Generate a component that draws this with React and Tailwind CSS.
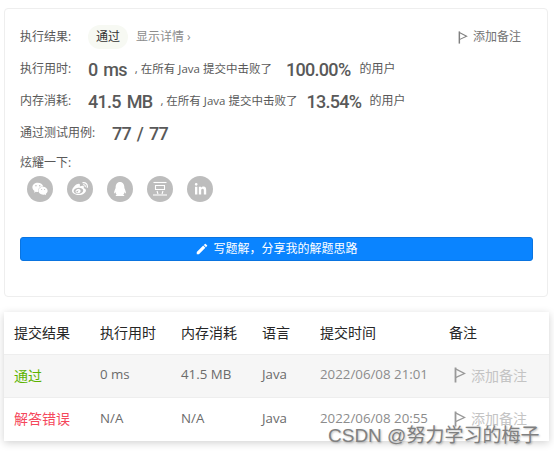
// App.jsx - submission result panel
import React from 'react';
import { FaWeixin, FaWeibo, FaQq, FaLinkedinIn } from 'react-icons/fa';
import { MdEdit } from 'react-icons/md';

const Flag = ({ className }) => (
  <svg viewBox="0 0 12 16" className={className} fill="none" stroke="currentColor">
    <path d="M1.5 0.5V15.5" strokeWidth="1.8" />
    <path d="M1.5 1.8L10.5 6.5L1.5 10.6" strokeWidth="1.3" />
  </svg>
);

const Douban = () => (
  <svg viewBox="0 0 16 16" className="w-4 h-4" fill="none" stroke="currentColor" strokeWidth="1.1">
    <path d="M1.5 1.5H14.5" />
    <path d="M3.5 4.5H12.5V8.5H3.5Z" />
    <path d="M5 10L6 13" />
    <path d="M11 10L10 13" />
    <path d="M1 14H15" />
  </svg>
);

const Num = ({ className = '', children }) => (
  <span className={`font-['Roboto',sans-serif] font-medium text-[#595959] text-[18px] tracking-[-0.7px] [word-spacing:2px] ${className}`}>
    {children}
  </span>
);

const shareIcons = [
  <FaWeixin key="wx" className="text-[16px]" />,
  <FaWeibo key="wb" className="text-[16px]" />,
  <FaQq key="qq" className="text-[14px]" />,
  <Douban key="db" />,
  <FaLinkedinIn key="in" className="text-[13px]" />,
];

const rows = [
  { status: '通过', color: 'text-[#5cb300]', time: '0 ms', mem: '41.5 MB', date: '2022/06/08 21:01', bg: 'bg-[#f6f6f6]' },
  { status: '解答错误', color: 'text-[#f5475b]', time: 'N/A', mem: 'N/A', date: '2022/06/08 20:55', bg: 'bg-white' },
];

const gridCols = 'grid grid-cols-[86px_81px_81px_58px_129px_110px] items-center pl-[10px] pb-[2px] h-[43px]';

const App = () => {
  return (
    <div className="relative w-[554px] h-[455px] overflow-hidden bg-white font-['Open_Sans','Noto_Sans_CJK_SC',sans-serif] text-[13.3px]">
      <div className="pt-2 pl-1">
        {/* Result card */}
        <div className="w-[544px] h-[289px] border border-[#eeeeee] rounded-[4px] pt-4 pl-[15px] pr-[15px] text-[#595959] text-[11.5px]">
          <div className="flex items-center h-6">
            <span className="w-[68px] text-[12px]">执行结果:</span>
            <span className="w-10 h-6 flex items-center justify-center rounded-full bg-[#f7f9f3] text-[#333333] text-[12px]">通过</span>
            <span className="ml-2 text-[#8c8c8c] text-[12px]">显示详情 ›</span>
            <span className="ml-auto mr-[11px] flex items-center gap-[5px] text-[#737373] text-[12px]">
              <Flag className="w-[10px] h-[13px] text-[#808080]" />
              添加备注
            </span>
          </div>
          <div className="flex items-center h-6 mt-2">
            <span className="w-[68px] text-[12px]">执行用时:</span>
            <Num>0 ms</Num>
            <span className="ml-2">, 在所有 Java 提交中击败了</span>
            <Num className="ml-[14px]">100.00%</Num>
            <span className="ml-[9px] text-[12px]">的用户</span>
          </div>
          <div className="flex items-center h-6 mt-2">
            <span className="w-[68px] text-[12px]">内存消耗:</span>
            <Num>41.5 MB</Num>
            <span className="ml-2">, 在所有 Java 提交中击败了</span>
            <Num className="ml-[9px]">13.54%</Num>
            <span className="ml-2 text-[12px]">的用户</span>
          </div>
          <div className="flex items-center h-6 mt-2">
            <span className="w-[92px] text-[12px]">通过测试用例:</span>
            <Num>77 / 77</Num>
          </div>
          <div className="h-5 mt-2 flex items-center text-[12px]">炫耀一下:</div>
          <div className="flex gap-[14px] pl-[7px] mt-[3px]">
            {shareIcons.map((icon, i) => (
              <div key={i} className="w-[26px] h-[26px] rounded-full bg-[#bdbdbd] text-white flex items-center justify-center">
                {icon}
              </div>
            ))}
          </div>
          <button className="mt-[35px] w-[513px] h-6 rounded-[3px] bg-[#0a84ff] border border-[#0a74e0] text-white text-[12px] flex items-center justify-center gap-[4px]">
            <MdEdit className="text-[14px]" />
            {'写题解\uFF0C分享我的解题思路'}
          </button>
        </div>

        {/* Submission table */}
        <div className="mt-[15px] w-[545px] bg-white shadow-[0_2px_8px_rgba(0,0,0,0.18)]">
          <div className={`${gridCols} text-[#262626] text-[14px] border-b border-[#eeeeee]`}>
            <span>提交结果</span>
            <span>执行用时</span>
            <span>内存消耗</span>
            <span>语言</span>
            <span>提交时间</span>
            <span>备注</span>
          </div>
          {rows.map((row) => (
            <div key={row.date} className={`${gridCols} ${row.bg} text-[#6b6b6b] border-b border-[#eeeeee] last:border-b-0`}>
              <span className={`${row.color} text-[14px]`}>{row.status}</span>
              <span>{row.time}</span>
              <span>{row.mem}</span>
              <span>Java</span>
              <span className="text-[#8c8c8c] whitespace-nowrap">{row.date}</span>
              <span className="flex items-center gap-[5px] pl-[5px] text-[#c4c4c4] text-[14px]">
                <Flag className="w-[12px] h-[16px] text-[#999999]" />
                添加备注
              </span>
            </div>
          ))}
        </div>
      </div>

      {/* Watermark */}
      <div className="absolute left-[328px] top-[423px] text-[19px] leading-[26px] whitespace-nowrap text-[#808080] [text-shadow:1px_1px_2px_rgba(0,0,0,0.25)] font-['Liberation_Sans','Noto_Sans_CJK_SC',sans-serif]">
        CSDN @努力学习的梅子
      </div>
    </div>
  );
};

export default App;
